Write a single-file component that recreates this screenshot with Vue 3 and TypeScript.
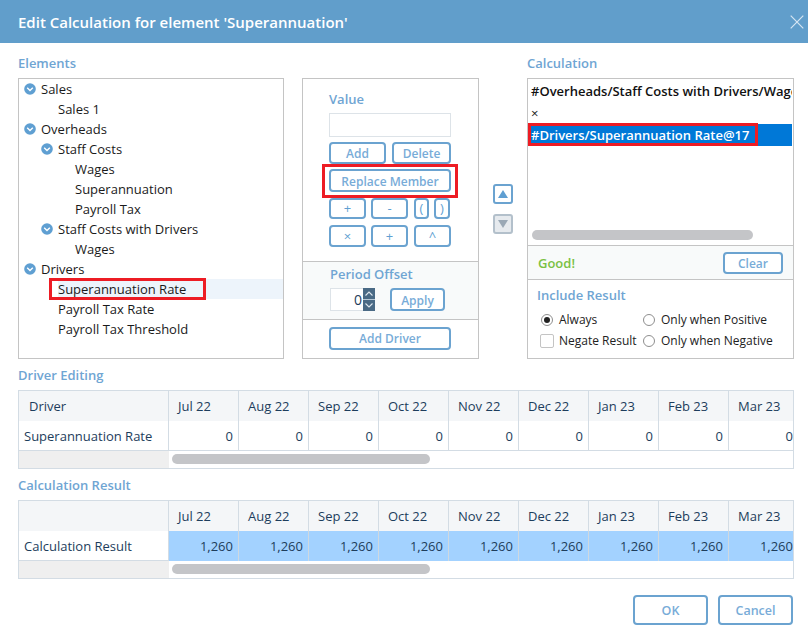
<script setup lang="ts">
const tree = [
  { label: 'Sales', level: 0, open: true },
  { label: 'Sales 1', level: 1 },
  { label: 'Overheads', level: 0, open: true },
  { label: 'Staff Costs', level: 1, open: true },
  { label: 'Wages', level: 2 },
  { label: 'Superannuation', level: 2 },
  { label: 'Payroll Tax', level: 2 },
  { label: 'Staff Costs with Drivers', level: 1, open: true },
  { label: 'Wages', level: 2 },
  { label: 'Drivers', level: 0, open: true },
  { label: 'Superannuation Rate', level: 1, marked: true },
  { label: 'Payroll Tax Rate', level: 1 },
  { label: 'Payroll Tax Threshold', level: 1 },
]
const months = ['Jul 22', 'Aug 22', 'Sep 22', 'Oct 22', 'Nov 22', 'Dec 22', 'Jan 23', 'Feb 23', 'Mar 23']
</script>

<template>
  <div class="dialog">
    <header class="head">
      <h1>Edit Calculation for element 'Superannuation'</h1>
      <svg class="close" width="14" height="14" viewBox="0 0 14 14"><path d="M.7.7l12.600 12.600M13.300.7L.7 13.300" stroke="#d5e5f2" stroke-width="1.200" fill="none" /></svg>
    </header>

    <section class="top">
      <div class="col-elements">
        <h2>Elements</h2>
        <div class="box tree">
          <div v-for="(n, i) in tree" :key="i" class="node" :class="['lv' + n.level, { marked: n.marked }]">
            <svg v-if="n.open" class="chev" width="12" height="12" viewBox="0 0 12 12">
              <circle cx="6" cy="6" r="5.800" fill="#5f9fd2" />
              <path d="M3.200 4.800L6 7.500l2.800-2.700" stroke="#fff" stroke-width="1.400" fill="none" />
            </svg>
            <span class="node-text">{{ n.label }}</span>
            <i v-if="n.marked" class="mark mark-tree"></i>
          </div>
        </div>
      </div>

      <div class="box mid">
        <div class="mid-main">
          <div class="mid-label">Value</div>
          <div class="value-input"></div>
          <div class="row r1">
            <button class="btn add">Add</button>
            <button class="btn del">Delete</button>
          </div>
          <div class="replace-wrap">
            <button class="btn replace">Replace Member</button>
            <i class="mark mark-replace"></i>
          </div>
          <div class="ops">
            <button class="btn op">+</button>
            <button class="btn op">-</button>
            <button class="btn op">(</button>
            <button class="btn op">)</button>
          </div>
          <div class="ops ops2">
            <button class="btn op">×</button>
            <button class="btn op">+</button>
            <button class="btn op">^</button>
          </div>
        </div>
        <div class="offset">
          <div class="mid-label off-label">Period Offset</div>
          <div class="off-row">
            <div class="spin-input">0</div>
            <div class="spin">
              <svg width="12" height="11" viewBox="0 0 12 11"><path d="M2.500 7.500L6 4l3.500 3.500" stroke="#dfe7ee" stroke-width="1.100" fill="none" /></svg>
              <svg width="12" height="11" viewBox="0 0 12 11"><path d="M2.500 3.500L6 7l3.500-3.500" stroke="#dfe7ee" stroke-width="1.100" fill="none" /></svg>
            </div>
            <button class="btn apply">Apply</button>
          </div>
        </div>
        <div class="mid-foot">
          <button class="btn driver">Add Driver</button>
        </div>
      </div>

      <div class="arrows">
        <div class="arrow">
          <svg width="10" height="8" viewBox="0 0 10 8"><path d="M5 0l5 8H0z" fill="#5f9fd2" /></svg>
        </div>
        <div class="arrow off">
          <svg width="10" height="8" viewBox="0 0 10 8"><path d="M5 8L10 0H0z" fill="#9aa8b5" /></svg>
        </div>
      </div>

      <div class="col-calc">
        <h2>Calculation</h2>
        <div class="box calc">
          <div class="calc-list">
            <div class="calc-line strong">#Overheads/Staff Costs with Drivers/Wages@17</div>
            <div class="calc-line">×</div>
            <div class="calc-line selected">
              <span>#Drivers/Superannuation Rate@17</span>
              <i class="mark mark-calc"></i>
            </div>
            <div class="calc-scroll"><span></span></div>
          </div>
          <div class="status">
            <span class="good">Good!</span>
            <button class="btn clear">Clear</button>
          </div>
          <div class="include">
            <div class="inc-title">Include Result</div>
            <div class="opts">
              <label class="opt"><i class="radio on"></i>Always</label>
              <label class="opt"><i class="radio"></i>Only when Positive</label>
              <label class="opt neg"><i class="check"></i>Negate Result</label>
              <label class="opt"><i class="radio"></i>Only when Negative</label>
            </div>
          </div>
        </div>
      </div>
    </section>

    <h2 class="tbl-title t1">Driver Editing</h2>
    <div class="table">
      <div class="grid hdr">
        <div class="cell first driver-h">Driver</div>
        <div v-for="m in months" :key="m" class="cell month">{{ m }}</div>
      </div>
      <div class="grid body">
        <div class="cell first">Superannuation Rate</div>
        <div v-for="m in months" :key="m" class="cell num">0</div>
      </div>
      <div class="scrollrow">
        <div class="corner"></div>
        <div class="track"><span></span></div>
      </div>
    </div>

    <h2 class="tbl-title t2">Calculation Result</h2>
    <div class="table">
      <div class="grid hdr">
        <div class="cell first"></div>
        <div v-for="m in months" :key="m" class="cell month">{{ m }}</div>
      </div>
      <div class="grid body">
        <div class="cell first">Calculation Result</div>
        <div v-for="m in months" :key="m" class="cell num blue">1,260</div>
      </div>
      <div class="scrollrow">
        <div class="corner"></div>
        <div class="track"><span></span></div>
      </div>
    </div>

    <footer class="foot">
      <button class="btn big">OK</button>
      <button class="btn big">Cancel</button>
    </footer>
  </div>
</template>

<style>
html, body { margin: 0; background: #fff; }
</style>

<style scoped>
.dialog {
  width: 808px;
  height: 629px;
  overflow: hidden;
  background: #fff;
  font-family: "Open Sans", "Liberation Sans", sans-serif;
  font-size: 13px;
  color: #1a1a1a;
}
.head {
  height: 43px;
  background: #619ecb;
  display: flex;
  align-items: center;
  justify-content: space-between;
  padding: 0 4px 0 18px;
}
.head h1 {
  margin: 0;
  color: #fff;
  font-size: 15px;
  font-weight: 600;
}
h2 {
  margin: 0;
  font-size: 13px;
  line-height: 18px;
  font-weight: 600;
  color: #6fa5d3;
}
.top {
  display: flex;
  padding: 11px 14px 0 18px;
  height: 314px;
  box-sizing: border-box;
  align-items: flex-start;
}
.col-elements { width: 266px; }
.col-elements h2, .col-calc h2 { height: 24px; line-height: 18px; }
.box {
  border: 1px solid #c4c4c4;
  box-sizing: border-box;
  height: 281px;
}
.node {
  position: relative;
  height: 20px;
  line-height: 20px;
  display: flex;
  align-items: center;
  white-space: nowrap;
}
.node .chev { flex: none; margin-right: 5px; }
.lv0 { padding-left: 5px; }
.lv1 { padding-left: 39px; }
.lv1:has(.chev) { padding-left: 22px; }
.lv2 { padding-left: 56px; }
.marked { background: linear-gradient(to right, #fff 39px, #edf4fb 39px); }
.mark {
  position: absolute;
  display: block;
  border: 3px solid #ed1c24;
  box-sizing: border-box;
  pointer-events: none;
}
.mark-tree { left: 30px; top: -1px; width: 157px; height: 22px; }
.mid {
  width: 177px;
  margin: 24px 0 0 18px;
  display: flex;
  flex-direction: column;
}
.mid-main { height: 182px; padding: 11px 27px 0 26px; box-sizing: border-box; }
.mid-label { color: #6fa5d3; font-weight: 600; font-size: 13px; line-height: 18px; }
.value-input {
  margin-top: 5px;
  height: 24px;
  width: 122px;
  box-sizing: border-box;
  border: 1px solid #dde3e8;
}
.btn {
  font-family: inherit;
  font-weight: 600;
  font-size: 12px;
  color: #78acd8;
  background: #fff;
  border: 2px solid #6ba3d0;
  border-radius: 4px;
  padding: 1px 0 0;
  box-sizing: border-box;
  line-height: 1;
}
.row { display: flex; justify-content: space-between; margin-top: 5px; width: 122px; }
.add { width: 57px; height: 22px; }
.del { width: 59px; height: 22px; }
.replace-wrap { position: relative; margin-top: 5px; width: 122px; height: 23px; }
.replace { width: 122px; height: 23px; display: block; padding-top: 2px; }
.mark-replace { left: -7px; top: -5px; width: 136px; height: 34px; }
.ops {
  display: grid;
  grid-template-columns: 37px 37px 16px 16px;
  column-gap: 5px;
  margin-top: 6px;
  width: 122px;
}
.ops .op:nth-child(3) { margin-left: 1px; }
.ops .op { height: 21px; padding-top: 0; }
.ops2 { grid-template-columns: 37px 37px 37px; margin-top: 6px; }
.ops2 .op { height: 22px; padding-top: 1px; }
.ops2 .op:nth-child(3) { margin-left: 1px; width: 37px; }
.op { font-weight: 400; font-size: 13px; color: #5f9fd2; }
.offset {
  height: 59px;
  box-sizing: border-box;
  border-top: 1px solid #c4c4c4;
  border-bottom: 1px solid #c4c4c4;
  background: #f8fafa;
  padding: 3px 0 0 27px;
}
.off-row { display: flex; margin-top: 5px; }
.spin-input {
  width: 33px;
  height: 23px;
  box-sizing: border-box;
  background: #fff;
  border: 1px solid #dde3e8;
  border-right: 0;
  text-align: right;
  line-height: 21px;
  padding-right: 1px;
  font-size: 14px;
  color: #1d3d5c;
}
.spin {
  width: 12px;
  height: 23px;
  background: #4a6a85;
  display: flex;
  flex-direction: column;
  justify-content: space-between;
  background-image: linear-gradient(#b9c9d6, #b9c9d6);
  background-repeat: no-repeat;
  background-size: 100% 1px;
  background-position: 0 11px;
}
.spin svg { display: block; }
.apply { width: 55px; height: 23px; margin-left: 15px; font-size: 12px; padding-top: 2px; }
.mid-foot { padding: 7px 0 0 26px; }
.driver { width: 122px; height: 23px; }
.arrows {
  width: 48px;
  margin-top: 130px;
  padding-left: 14px;
  box-sizing: border-box;
  display: flex;
  flex-direction: column;
  gap: 10px;
}
.arrow {
  width: 20px;
  height: 20px;
  box-sizing: border-box;
  border: 2px solid #6ba3d0;
  border-radius: 3px;
  display: flex;
  align-items: center;
  justify-content: center;
}
.arrow.off { border-color: #b3c0cb; background: #e6eaee; }
.col-calc { width: 267px; }
.calc { display: flex; flex-direction: column; }
.calc-list { height: 166px; position: relative; padding-top: 1px; box-sizing: border-box; }
.calc-line {
  position: relative;
  height: 22px;
  line-height: 22px;
  padding-left: 3px;
  width: 264px;
  box-sizing: border-box;
  white-space: nowrap;
  overflow: hidden;
  font-size: 13px;
}
.strong { font-weight: 600; color: #111; padding-right: 2px; }
.selected {
  overflow: visible;
  background: #0078d7;
  color: #fff;
  font-weight: 600;
}
.mark-calc { left: 0; top: -1px; width: 230px; height: 23px; }
.calc-scroll { position: absolute; left: 4px; top: 151px; width: 221px; height: 10px; }
.calc-scroll span { display: block; height: 100%; background: #c4c5c8; border-radius: 5px; }
.status {
  height: 35px;
  box-sizing: border-box;
  border-top: 1px solid #c4c4c4;
  border-bottom: 1px solid #c4c4c4;
  background: #f8fafa;
  display: flex;
  align-items: center;
  justify-content: space-between;
  padding: 0 10px;
}
.good { color: #7ac143; font-weight: 600; font-size: 13px; }
.clear { width: 60px; height: 22px; margin-top: 1px; font-size: 12px; }
.include { padding: 6px 0 0 9px; }
.inc-title { color: #6fa5d3; font-weight: 600; font-size: 13px; line-height: 18px; }
.opts {
  display: grid;
  grid-template-columns: 102px 1fr;
  grid-auto-rows: 21px;
  margin-top: 5px;
  padding-left: 3px;
  font-size: 12px;
  color: #222;
}
.opt { display: flex; align-items: center; white-space: nowrap; }
.radio {
  width: 12px;
  height: 12px;
  box-sizing: border-box;
  border: 1px solid #8e8e8e;
  border-radius: 50%;
  margin: 0 6px 0 1px;
  flex: none;
  background: #fff;
  position: relative;
}
.radio.on::after {
  content: "";
  position: absolute;
  left: 2px;
  top: 2px;
  width: 6px;
  height: 6px;
  border-radius: 50%;
  background: #222;
}
.check {
  width: 14px;
  height: 14px;
  box-sizing: border-box;
  border: 1px solid #c4c4c4;
  border-radius: 2px;
  margin-right: 5px;
  flex: none;
}
.tbl-title { margin-left: 18px; }
.t1 { margin-top: 9px; margin-bottom: 6px; height: 18px; }
.t2 { margin-top: 7px; margin-bottom: 6px; height: 18px; }
.table {
  margin-left: 18px;
  width: 776px;
  height: 79px;
  box-sizing: border-box;
  border: 1px solid #d3dce4;
  overflow: hidden;
  color: #1d3d5c;
}
.grid {
  display: grid;
  grid-template-columns: 150px repeat(9, 70px);
  height: 30px;
  box-sizing: border-box;
  border-bottom: 1px solid #d3dce4;
  width: 780px;
}
.cell {
  box-sizing: border-box;
  border-right: 1px solid #d3dce4;
  line-height: 30px;
  white-space: nowrap;
  font-size: 13px;
}
.hdr .cell { background: #f4f6f8; }
.first { padding-left: 5px; }
.driver-h { padding-left: 10px; }
.month { padding-left: 9px; }
.num { text-align: right; padding-right: 5px; }
.blue { background: #a3d2ff; border-right-color: #cfd8df; }
.scrollrow { display: flex; height: 17px; }
.corner { width: 150px; background: #efefef; flex: none; }
.track { flex: 1; padding: 3px 0 0 3px; }
.track span { display: block; width: 258px; height: 10px; background: #c4c5c8; border-radius: 5px; }
.foot {
  display: flex;
  justify-content: flex-end;
  gap: 10px;
  margin-top: 16px;
  padding-right: 15px;
}
.big { width: 75px; height: 30px; font-size: 12.500px; padding-top: 3px; }
</style>
